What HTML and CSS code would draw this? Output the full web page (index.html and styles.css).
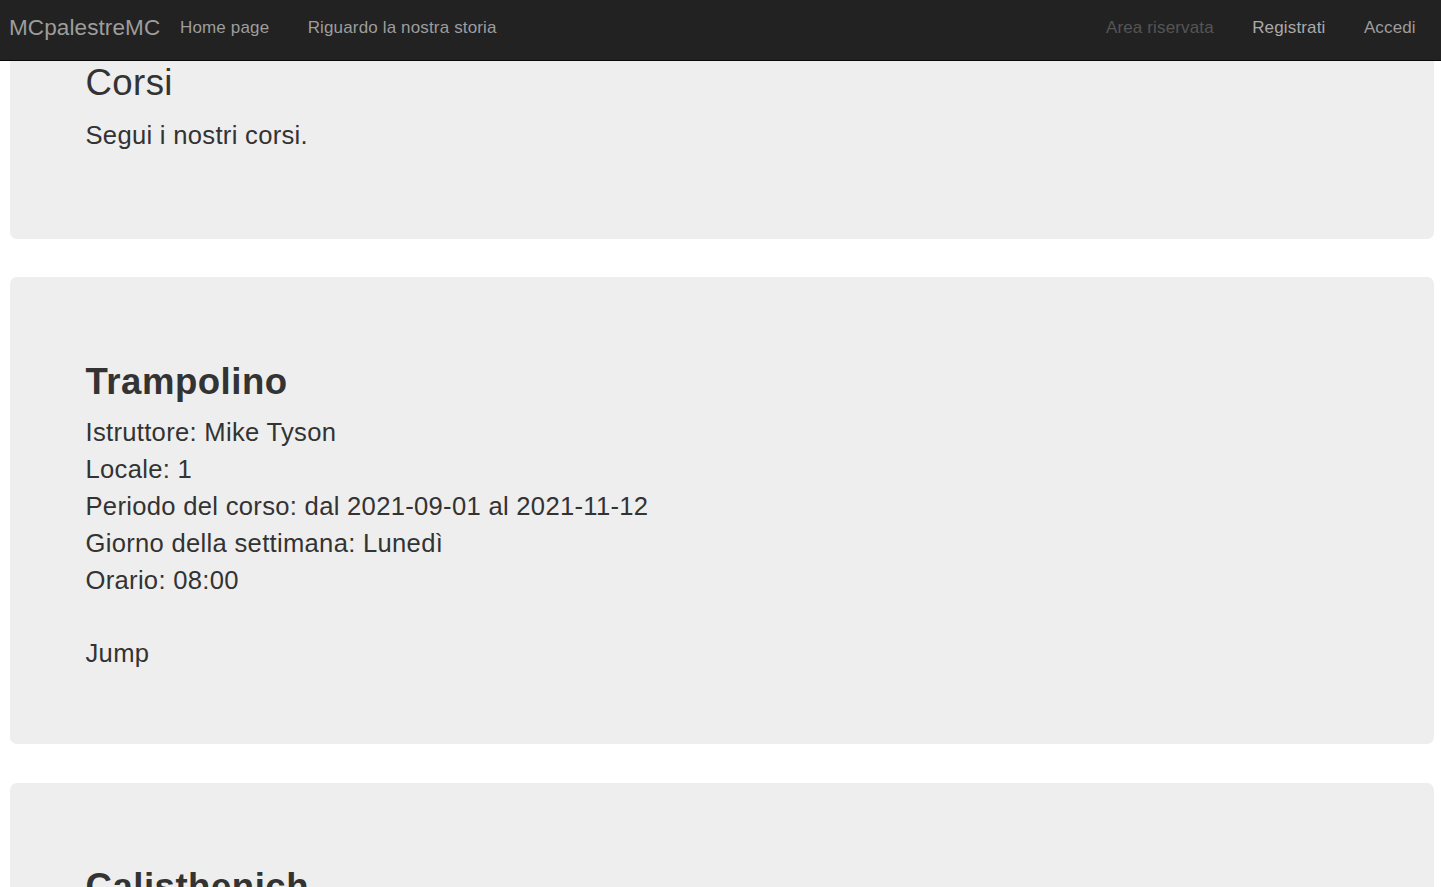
FILE: index.html
```html
<!DOCTYPE html>
<html lang="it">
<head>
<meta charset="utf-8">
<title>Corsi - MCpalestreMC</title>
<link rel="stylesheet" href="styles.css">
</head>
<body>
<nav class="navbar">
  <a class="brand" href="#">MCpalestreMC</a>
  <ul class="nav">
    <li><a href="#">Home page</a></li>
    <li><a href="#">Riguardo la nostra storia</a></li>
  </ul>
  <ul class="nav nav-right">
    <li><a class="disabled" href="#">Area riservata</a></li>
    <li><a class="bright" href="#">Registrati</a></li>
    <li><a href="#">Accedi</a></li>
  </ul>
</nav>
<main class="page">
  <section class="jumbotron intro">
    <h1 class="title">Corsi</h1>
    <p>Segui i nostri corsi.</p>
  </section>
  <section class="jumbotron course">
    <h2>Trampolino</h2>
    <p>Istruttore: Mike Tyson<br>Locale: 1<br>Periodo del corso: dal 2021-09-01 al 2021-11-12<br>Giorno della settimana: Lunedì<br>Orario: 08:00<br><br>Jump</p>
  </section>
  <section class="jumbotron course">
    <h2>Calisthenich</h2>
    <p>Istruttore:<br>Locale:<br>Periodo del corso:<br>Giorno della settimana:<br>Orario:</p>
  </section>
</main>
</body>
</html>
```

FILE: styles.css
```css
html, body {
  margin: 0;
  padding: 0;
}

body {
  font-family: "Liberation Sans", Arial, Helvetica, sans-serif;
  color: #333;
  background: #fff;
}

.navbar {
  position: fixed;
  top: 0;
  left: 0;
  right: 0;
  height: 60px;
  background: #222;
  border-bottom: 1px solid #080808;
  display: flex;
  align-items: flex-start;
  padding: 0 6px 0 9px;
  z-index: 10;
}

.brand {
  display: block;
  font-size: 22.5px;
  line-height: 24.4px;
  padding-top: 16.2px;
  color: #9d9d9d;
  text-decoration: none;
  letter-spacing: 0.1px;
}

.nav {
  list-style: none;
  margin: 0;
  padding: 0;
  display: flex;
}

.nav-right {
  margin-left: auto;
}

.nav a {
  display: block;
  font-size: 17px;
  line-height: 20.7px;
  padding: 18.2px 19.2px 0;
  color: #9d9d9d;
  text-decoration: none;
  letter-spacing: 0.15px;
}

.nav li:first-child a {
  padding-left: 19.8px;
}

.nav a.disabled {
  color: #555;
}

.nav a.bright {
  color: #aaa;
}

.page {
  padding: 0;
}

.jumbotron {
  background: #eee;
  border-radius: 7px;
  margin: 0 6.7px 38.4px 10px;
  padding: 60px 20px 72.2px 75.5px;
}

.jumbotron h1,
.jumbotron h2 {
  font-size: 36.6px;
  line-height: 40.26px;
  font-weight: bold;
  margin: 24.7px 0 12px;
  letter-spacing: 0.5px;
}

.jumbotron p {
  font-size: 25.6px;
  line-height: 36.8px;
  margin: 0;
  letter-spacing: 0.3px;
}

.intro {
  padding-top: 38px;
  padding-bottom: 85.5px;
  margin-bottom: 38.5px;
}

.intro .title {
  font-weight: normal;
  margin-bottom: 13.7px;
  letter-spacing: 0.4px;
}
```
